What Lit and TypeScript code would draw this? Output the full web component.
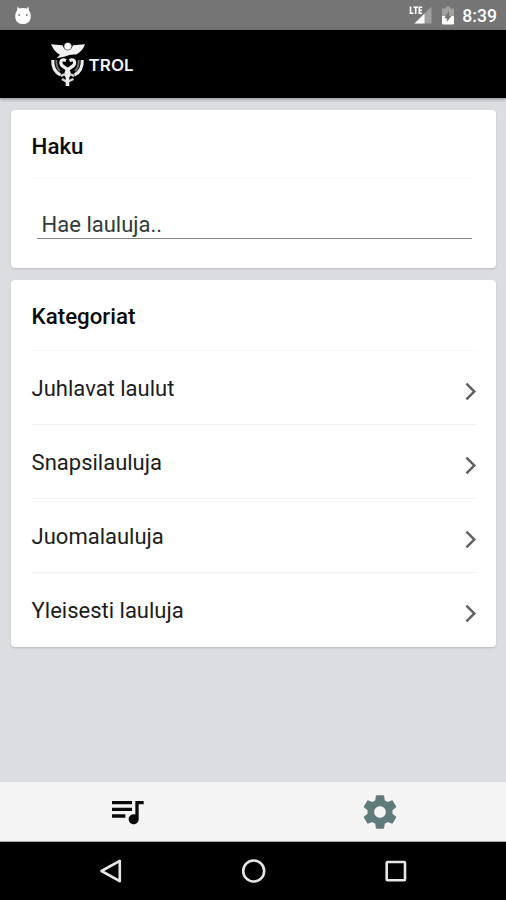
import { LitElement, html, css } from "lit";
import { customElement } from "lit/decorators.js";

@customElement("app-root")
export class AppRoot extends LitElement {
  private categories = ["Juhlavat laulut", "Snapsilauluja", "Juomalauluja", "Yleisesti lauluja"];

  static styles = css`
    :host {
      display: flex;
      flex-direction: column;
      height: 900px;
      width: 506px;
      box-sizing: border-box;
      background: #dcdde1;
      font-family: Roboto, "Liberation Sans", sans-serif;
      color: #1c1c1c;
      overflow: hidden;
    }
    svg { display: block; flex: none; }
    .status {
      height: 30px;
      flex: none;
      background: #757575;
      display: flex;
      align-items: center;
      padding: 0 9px 0 14px;
    }
    .space { flex: 1; }
    .time { font-size: 17.6px; font-weight: 500; color: #fff; line-height: 30px; padding-top: 2px; }
    .signal { margin-right: 10px; }
    .battery { margin-right: 8px; }
    .header {
      height: 68px;
      flex: none;
      background: #000;
      display: flex;
      align-items: center;
      padding-left: 50px;
      border-bottom: 1px solid #a9aaad;
      box-shadow: 0 1px 3px rgba(0, 0, 0, 0.25);
    }
    .brand { margin-left: 1px; }
    .brand text { font: 600 16px Inter, sans-serif; fill: #f4f4f4; }
    .content {
      flex: 1;
      padding: 11px 10px 0 11px;
      display: flex;
      flex-direction: column;
      gap: 12px;
    }
    .card {
      background: #fff;
      border-radius: 4px;
      box-shadow: 0 1px 2px rgba(0, 0, 0, 0.16);
      box-sizing: border-box;
      padding: 0 20px 0 20.6px;
    }
    .search { height: 158px; }
    .title {
      height: 70px;
      line-height: 72px;
      box-sizing: border-box;
      border-bottom: 1px solid #f9f9f9;
      font-size: 22.3px;
      font-weight: 500;
      color: #0c0c0c;
    }
    .categories { padding-bottom: 1px; }
    .categories .title { height: 71px; }
    .search .title { height: 69px; }
    .field {
      margin: 29px 4px 0 5px;
      height: 30px;
      line-height: 34px;
      padding-left: 5px;
      border-bottom: 1px solid #868686;
      font-size: 22px;
      color: #303b3a;
    }
    .row {
      height: 74px;
      box-sizing: border-box;
      display: flex;
      align-items: center;
      justify-content: space-between;
      border-bottom: 1px solid #f2f2f2;
      font-size: 22px;
    }
    .row:last-child { border-bottom: 0; height: 73px; }
    .label { padding-top: 1px; }
    .chevron { margin: 7px -12px 0 0; fill: #626262; }
    .tabs {
      height: 60px;
      flex: none;
      background: #f4f4f4;
      display: flex;
      box-sizing: border-box;
      border-bottom: 1px solid #a5a5a5;
    }
    .tab { flex: 1; display: flex; align-items: center; justify-content: center; }
    .tab.songs { fill: #0a0a0a; padding-bottom: 1px; }
    .tab.settings { fill: #5f7b7a; }
    .nav {
      height: 58px;
      flex: none;
      background: #000;
      display: flex;
      align-items: center;
      justify-content: center;
      gap: 114px;
      fill: none;
      stroke: #e6e6e6;
      stroke-width: 2.6;
    }
  `;

  render() {
    return html`
      <div class="status">
        <svg width="18" height="20" viewBox="0 0 18 20">
          <path fill="#fff" d="M3.6 1.5 5.2 3.6Q9 2.2 12.8 3.6L14.4 1.5 15 5.4Q17 8 16.7 10.2V13Q15.5 19 9 19T1.3 13V10.2Q1 8 3 5.4Z" />
          <circle cx="5.2" cy="10" r="0.9" fill="#777" /><circle cx="12.8" cy="10" r="0.9" fill="#777" />
        </svg>
        <div class="space"></div>
        <svg class="signal" width="23" height="20" viewBox="0 0 23 20">
          <path fill="#a0a0a0" d="M22.5 1.5V18.5H5.5Z" />
          <path fill="#fff" d="M15.5 8.5V18.5H5.5Z" />
          <path fill="none" stroke="#fff" stroke-width="1.6" d="M1.5 1.5V8.3H4.5M4.5 2.2H9M6.7 2.2V9M13.2 2.2H10.3V8.3H13.2M10.3 5.2H13" />
        </svg>
        <svg class="battery" width="12" height="19" viewBox="0 0 12 19">
          <path fill="#a0a0a0" d="M4 0.5H8V2.5H12V10H0V2.5H4Z" />
          <path fill="#fff" d="M0 10H12V17.5Q12 18.5 11 18.5H1Q0 18.5 0 17.5Z" />
          <path fill="#757575" d="M4.8 16V12.3H2.2L7 5V10H9.5Z" />
        </svg>
        <div class="time">8:39</div>
      </div>
      <div class="header">
        <svg width="36" height="48" viewBox="50 40 36 48" fill="none" stroke="#ededed">
          <path fill="#f0f0f0" stroke="none" d="M51 44.2 62.5 45.2Q64 49.6 67.7 49.6T73 45.2L85 44.2Q82.5 51.5 76 54.5 70 54 65 56.5L56.5 58.2 60 54.8Q54 51.5 51 44.2Z" />
          <circle cx="67.8" cy="46.3" r="3.9" fill="#f8f8f8" stroke="#000" stroke-width="0.5" />
          <path stroke-width="3" d="M52.8 60Q52 70.5 60.5 75M82.2 60Q83 70.5 74.5 75" />
          <path stroke-width="1.8" d="M56.3 60Q56 67 60 71M78.7 60Q79 67 75 71" stroke="#777" />
          <path stroke-width="3.2" d="M66 60.5C59.5 58 59.5 64.5 64 67 68.5 69.5 71 73.5 67.5 77M69.5 60.5C76 58 76 64.5 71.5 67 67 69.5 64 73.5 67.5 77" />
          <path stroke-width="2.4" d="M61 76.5Q64 72.5 67.5 77 71 72.5 74 76.5M62 79 67 82 73.5 79" stroke="#d8d8d8" />
          <path stroke-width="3.6" d="M67.5 68V86" />
        </svg>
        <svg class="brand" width="50" height="24" viewBox="0 0 50 24">
          <text x="1.6" y="19" textLength="45" lengthAdjust="spacingAndGlyphs">TROL</text>
        </svg>
      </div>
      <div class="content">
        <div class="card search">
          <div class="title">Haku</div>
          <div class="field">Hae lauluja..</div>
        </div>
        <div class="card categories">
          <div class="title">Kategoriat</div>
          ${this.categories.map(
            (name) => html`<div class="row">
              <span class="label">${name}</span>
              <svg class="chevron" width="35" height="35" viewBox="0 0 24 24">
                <path d="M9.8 6L8.59 7.21 13.38 12l-4.79 4.79L9.8 18l6-6z" />
              </svg>
            </div>`
          )}
        </div>
      </div>
      <div class="tabs">
        <div class="tab songs">
          <svg width="40" height="40" viewBox="0 0 24 24">
            <path d="M15 6H3v2h12V6zm0 4H3v2h12v-2zM3 16h8v-2H3v2zM17 6v8.18c-.31-.11-.65-.18-1-.18-1.66 0-3 1.34-3 3s1.34 3 3 3 3-1.34 3-3V8h3V6h-5z" />
          </svg>
        </div>
        <div class="tab settings">
          <svg width="40" height="40" viewBox="0 0 24 24">
            <path d="M19.43 12.98c.04-.32.07-.64.07-.98s-.03-.66-.07-.98l2.11-1.65c.19-.15.24-.42.12-.64l-2-3.46c-.12-.22-.39-.3-.61-.22l-2.49 1c-.52-.4-1.08-.73-1.69-.98l-.38-2.65C14.46 2.18 14.25 2 14 2h-4c-.25 0-.46.18-.49.42l-.38 2.65c-.61.25-1.17.59-1.69.98l-2.49-1c-.23-.09-.49 0-.61.22l-2 3.46c-.13.22-.07.49.12.64l2.11 1.65c-.04.32-.07.65-.07.98s.03.66.07.98l-2.11 1.65c-.19.15-.24.42-.12.64l2 3.46c.12.22.39.3.61.22l2.49-1c.52.4 1.08.73 1.69.98l.38 2.65c.03.24.24.42.49.42h4c.25 0 .46-.18.49-.42l.38-2.65c.61-.25 1.17-.59 1.69-.98l2.49 1c.23.09.49 0 .61-.22l2-3.46c.12-.22.07-.49-.12-.64l-2.11-1.65zM12 15.5c-1.93 0-3.5-1.57-3.5-3.5s1.57-3.5 3.5-3.5 3.5 1.57 3.5 3.5-1.57 3.5-3.5 3.5z" />
          </svg>
        </div>
      </div>
      <div class="nav">
        <svg width="28" height="28" viewBox="0 0 28 28"><path stroke-linejoin="round" d="M4.5 14 22.8 3.8V24.2Z" /></svg>
        <svg width="28" height="28" viewBox="0 0 28 28"><circle cx="14.7" cy="14" r="10.5" /></svg>
        <svg width="28" height="28" viewBox="0 0 28 28"><rect x="5.7" y="5" width="18.3" height="18.3" rx="0.8" /></svg>
      </div>
    `;
  }
}
